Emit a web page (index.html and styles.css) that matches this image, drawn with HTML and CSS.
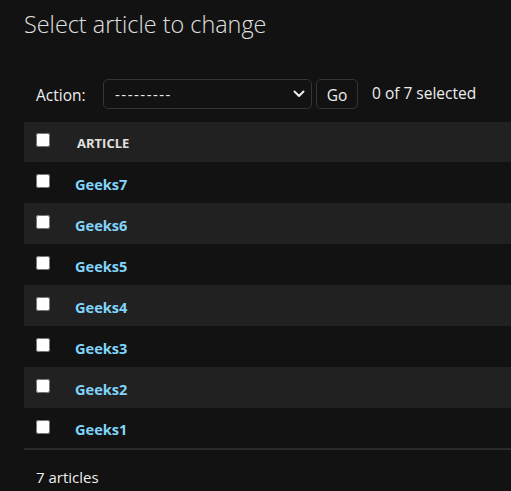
FILE: index.html
```html
<!DOCTYPE html>
<html lang="en">
<head>
<meta charset="utf-8">
<title>Select article to change</title>
<link rel="stylesheet" href="styles.css">
</head>
<body>
<div class="content">
  <h1 class="title">Select article to change</h1>
  <div class="changelist">
    <div class="actions">
      <label class="action-label">Action:</label>
      <div class="select">
        <span class="select-text">---------</span>
        <svg class="chevron" width="12" height="8" viewBox="0 0 12 8"><path d="M1.5 1.5 L6 6 L10.5 1.5" fill="none" stroke="#eeeeee" stroke-width="2" stroke-linecap="round" stroke-linejoin="round"/></svg>
      </div>
      <button class="go">Go</button>
      <span class="counter">0 of 7 selected</span>
    </div>
    <table class="result-list">
      <thead>
        <tr class="head-row">
          <th class="cb-cell"><input type="checkbox" class="cb"></th>
          <th class="col-title">ARTICLE</th>
        </tr>
      </thead>
      <tbody>
        <tr class="row"><td class="cb-cell"><input type="checkbox" class="cb"></td><td class="name"><a href="#">Geeks7</a></td></tr>
        <tr class="row alt"><td class="cb-cell"><input type="checkbox" class="cb"></td><td class="name"><a href="#">Geeks6</a></td></tr>
        <tr class="row"><td class="cb-cell"><input type="checkbox" class="cb"></td><td class="name"><a href="#">Geeks5</a></td></tr>
        <tr class="row alt"><td class="cb-cell"><input type="checkbox" class="cb"></td><td class="name"><a href="#">Geeks4</a></td></tr>
        <tr class="row"><td class="cb-cell"><input type="checkbox" class="cb"></td><td class="name"><a href="#">Geeks3</a></td></tr>
        <tr class="row alt"><td class="cb-cell"><input type="checkbox" class="cb"></td><td class="name"><a href="#">Geeks2</a></td></tr>
        <tr class="row"><td class="cb-cell"><input type="checkbox" class="cb"></td><td class="name"><a href="#">Geeks1</a></td></tr>
      </tbody>
    </table>
    <p class="paginator">7 articles</p>
  </div>
</div>
</body>
</html>
```
FILE: styles.css
```css
html, body {
  margin: 0;
  padding: 0;
  background: #121212;
  color: #eeeeee;
  font-family: "Open Sans", "Noto Sans", sans-serif;
}
.content {
  padding-left: 24px;
}
.title {
  margin: 0;
  padding-top: 8px;
  font-size: 23.4px;
  line-height: 32px;
  font-weight: 300;
  color: #e0e0e0;
}
.changelist {
  margin-top: 39px;
}
.actions {
  display: flex;
  align-items: center;
  height: 30px;
  padding-left: 12px;
  margin-bottom: 13px;
  font-size: 15.5px;
}
.action-label {
  width: 67px;
  padding-top: 2px;
}
.select {
  box-sizing: border-box;
  width: 209px;
  height: 30px;
  border: 1px solid #353535;
  border-radius: 5px;
  display: flex;
  align-items: center;
  justify-content: space-between;
  padding: 0 6px 0 11px;
}
.select-text {
  font-size: 15px;
  letter-spacing: 1.5px;
}
.chevron {
  display: block;
}
.go {
  box-sizing: border-box;
  margin-left: 4px;
  width: 42px;
  height: 30px;
  border: 1px solid #353535;
  border-radius: 5px;
  background: #121212;
  color: #eeeeee;
  font-family: inherit;
  font-size: 15.5px;
  padding: 0;
  padding-top: 2px;
}
.counter {
  margin-left: 14px;
  margin-top: -3px;
}
.result-list {
  width: 100%;
  border-collapse: collapse;
}
.head-row {
  background: #212121;
  height: 40px;
}
.result-list th,
.result-list td {
  padding: 0;
  text-align: left;
}
.result-list .cb-cell {
  width: 39px;
  padding: 11px 0 0 12px;
  vertical-align: top;
}
.result-list .col-title {
  font-size: 13px;
  font-weight: 700;
  color: #e0e0e0;
  padding-left: 2px;
  padding-top: 2px;
  vertical-align: middle;
}
.cb {
  margin: 0;
  width: 14px;
  height: 14px;
  display: block;
}
.row {
  height: 41px;
}
.result-list .row .cb-cell {
  padding-top: 12px;
}
.row.alt {
  background: #212121;
}
.result-list .name {
  font-size: 14.6px;
  vertical-align: middle;
  padding-top: 2px;
}
.name a {
  color: #81d4fa;
  font-weight: 700;
  text-decoration: none;
}
.row:last-child {
  border-bottom: 2px solid #2a2a2a;
}
.paginator {
  margin: 0;
  padding: 17px 0 0 12px;
  font-size: 15px;
  line-height: 20px;
}
```
